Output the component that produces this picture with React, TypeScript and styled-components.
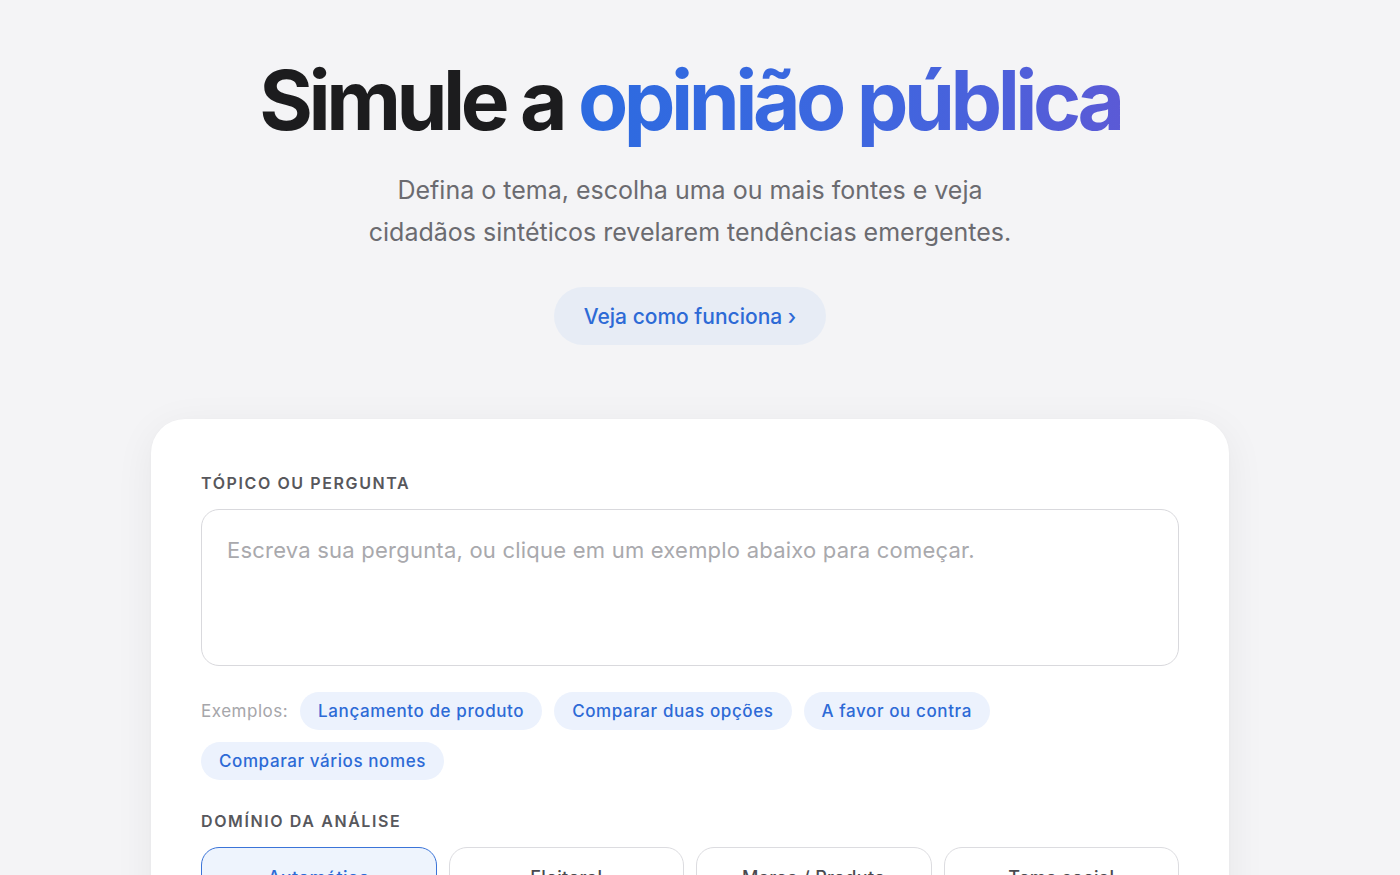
import React from 'react';
import styled, { createGlobalStyle } from 'styled-components';

const GlobalStyle = createGlobalStyle`
  * {
    box-sizing: border-box;
  }

  body {
    margin: 0;
    background: #f4f4f6;
    font-family: Inter, 'Noto Sans', sans-serif;
    -webkit-font-smoothing: antialiased;
  }
`;

const Page = styled.main`
  display: flex;
  flex-direction: column;
  align-items: center;
  padding: 56px 20px 0 0;
  min-height: 100vh;
`;

const Title = styled.h1`
  margin: 0;
  font-size: 82px;
  font-weight: 700;
  line-height: 1.1;
  letter-spacing: -0.055em;
  color: #1c1c1e;
`;

const Accent = styled.span`
  background: linear-gradient(90deg, #2c6be0 0%, #3f66df 55%, #5b5ad6 100%);
  -webkit-background-clip: text;
  background-clip: text;
  color: transparent;
`;

const Subtitle = styled.p`
  margin: 23px 0 0;
  max-width: 660px;
  text-align: center;
  font-size: 25px;
  line-height: 42px;
  color: #6b6b70;
`;

const HowButton = styled.button`
  margin-top: 34px;
  height: 58px;
  padding: 0 30px;
  border: none;
  border-radius: 29px;
  background: #e7ecf5;
  color: #2d6ad6;
  font-family: inherit;
  font-size: 21px;
  font-weight: 500;
  cursor: pointer;
`;

const Card = styled.section`
  width: 1078px;
  margin-top: 74px;
  padding: 54px 50px 40px;
  background: #fff;
  border-radius: 34px;
  box-shadow: 0 8px 40px rgba(20, 20, 40, 0.06), 0 1px 3px rgba(20, 20, 40, 0.03);
`;

const Label = styled.div<{ $spaced?: boolean }>`
  margin-top: ${(p) => (p.$spaced ? '31px' : '0')};
  font-size: 16px;
  font-weight: 600;
  line-height: 20px;
  letter-spacing: 0.1em;
  color: #57575c;
`;

const QuestionBox = styled.textarea`
  display: block;
  width: 100%;
  height: 157px;
  margin-top: 16px;
  padding: 26px 25px;
  border: 1px solid #d9d9dd;
  border-radius: 18px;
  resize: none;
  outline: none;
  font-family: inherit;
  font-size: 22px;
  line-height: 29px;
  letter-spacing: 0.01em;
  color: #222;

  &::placeholder {
    color: #a9a9ad;
  }
`;

const Examples = styled.div`
  display: flex;
  flex-wrap: wrap;
  align-items: center;
  gap: 12px;
  margin-top: 26px;
`;

const ExamplesLabel = styled.span`
  font-size: 17px;
  letter-spacing: 0.03em;
  color: #a6a6aa;
`;

const Chip = styled.button`
  height: 38px;
  padding: 0 18px;
  border: none;
  border-radius: 19px;
  background: #ecf2fd;
  color: #2d6ad6;
  font-family: inherit;
  font-size: 17px;
  font-weight: 500;
  letter-spacing: 0.035em;
  cursor: pointer;
`;

const DomainGrid = styled.div`
  display: grid;
  grid-template-columns: repeat(4, 1fr);
  gap: 12px;
  margin-top: 16px;
`;

const DomainOption = styled.button<{ $active?: boolean }>`
  height: 60px;
  border: ${(p) => (p.$active ? '1.5px solid #3b74d8' : '1px solid #dcdce0')};
  border-radius: 18px;
  background: ${(p) => (p.$active ? '#eef4fd' : '#fff')};
  color: ${(p) => (p.$active ? '#2d6ad6' : '#4a4a4f')};
  font-family: inherit;
  font-size: 18px;
  font-weight: 500;
  letter-spacing: 0.02em;
  cursor: pointer;
`;

const examples = ['Lançamento de produto', 'Comparar duas opções', 'A favor ou contra', 'Comparar vários nomes'];
const domains = ['Automático', 'Eleitoral', 'Marca / Produto', 'Tema social'];

const App = () => {
  return (
    <>
      <GlobalStyle />
      <Page>
        <Title>
          Simule a <Accent>opinião pública</Accent>
        </Title>
        <Subtitle>
          Defina o tema, escolha uma ou mais fontes e veja cidadãos sintéticos revelarem tendências emergentes.
        </Subtitle>
        <HowButton>Veja como funciona ›</HowButton>

        <Card>
          <Label>TÓPICO OU PERGUNTA</Label>
          <QuestionBox placeholder="Escreva sua pergunta, ou clique em um exemplo abaixo para começar." />
          <Examples>
            <ExamplesLabel>Exemplos:</ExamplesLabel>
            {examples.map((item) => (
              <Chip key={item}>{item}</Chip>
            ))}
          </Examples>

          <Label $spaced>DOMÍNIO DA ANÁLISE</Label>
          <DomainGrid>
            {domains.map((item, i) => (
              <DomainOption key={item} $active={i === 0}>
                {item}
              </DomainOption>
            ))}
          </DomainGrid>
        </Card>
      </Page>
    </>
  );
};

export default App;
